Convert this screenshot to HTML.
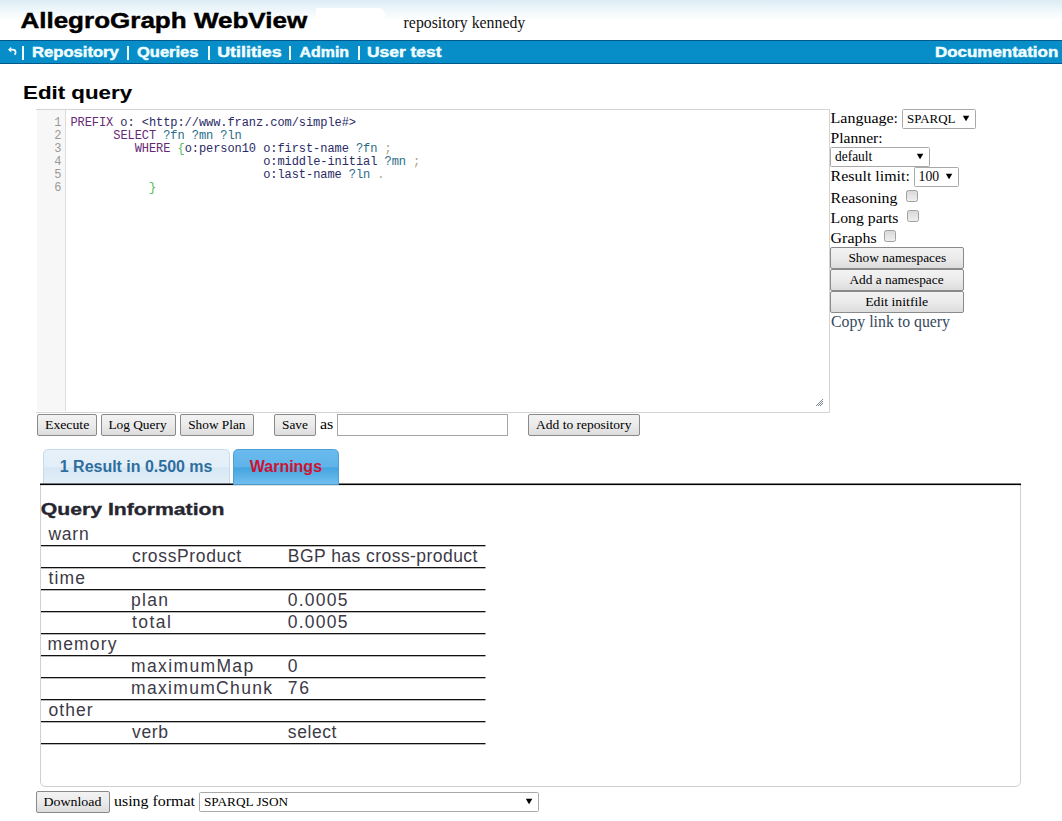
<!DOCTYPE html>
<html><head><meta charset="utf-8"><title>AllegroGraph WebView</title>
<style>html,body{margin:0;padding:0;background:#fff;overflow:hidden;width:1062px;height:821px}svg{display:block}</style>
</head><body>
<svg width="1062" height="821" viewBox="0 0 1062 821"><defs>
<linearGradient id="hdr" x1="0" y1="0" x2="0" y2="1">
 <stop offset="0" stop-color="#dcebf4"/><stop offset="0.1" stop-color="#e3f0f7"/><stop offset="0.25" stop-color="#eef7fb"/><stop offset="0.5" stop-color="#ffffff"/><stop offset="1" stop-color="#ffffff"/>
</linearGradient>
<linearGradient id="btn" x1="0" y1="0" x2="0" y2="1">
 <stop offset="0" stop-color="#f3f3f3"/><stop offset="0.5" stop-color="#ebebeb"/><stop offset="1" stop-color="#dcdcdc"/>
</linearGradient>
<linearGradient id="tab1" x1="0" y1="0" x2="0" y2="1">
 <stop offset="0" stop-color="#e6f1f9"/><stop offset="0.5" stop-color="#e3eff8"/><stop offset="0.52" stop-color="#d6e7f4"/><stop offset="1" stop-color="#e4f0f9"/>
</linearGradient>
<linearGradient id="tab2" x1="0" y1="0" x2="0" y2="1">
 <stop offset="0" stop-color="#6abbee"/><stop offset="0.5" stop-color="#5fb3e9"/><stop offset="0.52" stop-color="#44a4e0"/><stop offset="1" stop-color="#72bfee"/>
</linearGradient>
<linearGradient id="cb" x1="0" y1="0" x2="0" y2="1">
 <stop offset="0" stop-color="#d8d8d8"/><stop offset="1" stop-color="#efefef"/>
</linearGradient>
</defs><rect x="0" y="0" width="1062" height="40" rx="0" fill="url(#hdr)" />
<path d="M316 8 H377 Q385 8 385 16 V40 H316 Z" fill="#ffffff"/>
<text x="20.40" y="28" font-family='"Liberation Sans", sans-serif' font-size="22.5" font-weight="bold" fill="#000" stroke="#000" stroke-width="0.45" textLength="286.80" lengthAdjust="spacingAndGlyphs" >AllegroGraph WebView</text>
<text x="403.60" y="28" font-family='"Liberation Serif", serif' font-size="16" font-weight="normal" fill="#111" textLength="121.63" lengthAdjust="spacingAndGlyphs" >repository kennedy</text>
<rect x="0" y="40" width="1062" height="24" rx="0" fill="#078ec9" />
<rect x="0" y="40" width="1062" height="1" rx="0" fill="#03588a" />
<rect x="0" y="63" width="1062" height="1" rx="0" fill="#03588a" />
<path d="M8 49.7 L11.2 46.8 L11.2 52.6 Z" fill="#effdff"/>
<path d="M10.5 49.6 H12.5 Q15.6 49.6 15.6 52.2 Q15.6 53.6 14.6 54.6" fill="none" stroke="#effdff" stroke-width="1.7"/>
<rect x="22" y="46" width="2" height="14" rx="0" fill="#effdff" />
<rect x="127" y="46" width="2" height="14" rx="0" fill="#effdff" />
<rect x="208" y="46" width="2" height="14" rx="0" fill="#effdff" />
<rect x="289" y="46" width="2" height="14" rx="0" fill="#effdff" />
<rect x="358" y="46" width="2" height="14" rx="0" fill="#effdff" />
<text x="32.00" y="57" font-family='"Liberation Sans", sans-serif' font-size="14" font-weight="bold" fill="#effdff" stroke="#effdff" stroke-width="0.45" textLength="86.82" lengthAdjust="spacingAndGlyphs" >Repository</text>
<text x="137.00" y="57" font-family='"Liberation Sans", sans-serif' font-size="14" font-weight="bold" fill="#effdff" stroke="#effdff" stroke-width="0.45" textLength="61.47" lengthAdjust="spacingAndGlyphs" >Queries</text>
<text x="217.20" y="57" font-family='"Liberation Sans", sans-serif' font-size="14" font-weight="bold" fill="#effdff" stroke="#effdff" stroke-width="0.45" textLength="64.46" lengthAdjust="spacingAndGlyphs" >Utilities</text>
<text x="299.60" y="57" font-family='"Liberation Sans", sans-serif' font-size="14" font-weight="bold" fill="#effdff" stroke="#effdff" stroke-width="0.45" textLength="49.42" lengthAdjust="spacingAndGlyphs" >Admin</text>
<text x="367.00" y="57" font-family='"Liberation Sans", sans-serif' font-size="14" font-weight="bold" fill="#effdff" stroke="#effdff" stroke-width="0.45" textLength="74.46" lengthAdjust="spacingAndGlyphs" >User test</text>
<text x="935.00" y="57" font-family='"Liberation Sans", sans-serif' font-size="14" font-weight="bold" fill="#effdff" stroke="#effdff" stroke-width="0.45" textLength="123.22" lengthAdjust="spacingAndGlyphs" >Documentation</text>
<text x="23.00" y="98.5" font-family='"Liberation Sans", sans-serif' font-size="18" font-weight="bold" fill="#000" stroke="#000" stroke-width="0.1" textLength="109.08" lengthAdjust="spacingAndGlyphs" >Edit query</text>
<rect x="36" y="109" width="794" height="304" rx="0" fill="#fff" />
<path d="M36 109.5 H829.5 V412.5 H36" fill="none" stroke="#d4d4d4"/>
<rect x="37" y="110" width="28" height="301" rx="0" fill="#f7f7f7" />
<rect x="65" y="110" width="1" height="301" rx="0" fill="#dddddd" />
<text x="61.50" y="125.8" font-family='"Liberation Mono", monospace' font-size="12" font-weight="normal" fill="#999" text-anchor="end">1</text>
<text x="61.50" y="138.8" font-family='"Liberation Mono", monospace' font-size="12" font-weight="normal" fill="#999" text-anchor="end">2</text>
<text x="61.50" y="151.8" font-family='"Liberation Mono", monospace' font-size="12" font-weight="normal" fill="#999" text-anchor="end">3</text>
<text x="61.50" y="164.8" font-family='"Liberation Mono", monospace' font-size="12" font-weight="normal" fill="#999" text-anchor="end">4</text>
<text x="61.50" y="177.8" font-family='"Liberation Mono", monospace' font-size="12" font-weight="normal" fill="#999" text-anchor="end">5</text>
<text x="61.50" y="190.8" font-family='"Liberation Mono", monospace' font-size="12" font-weight="normal" fill="#999" text-anchor="end">6</text>
<text x="70.4" y="125.8" font-family='"Liberation Mono", monospace' font-size="12" xml:space="preserve" textLength="285.59999999999997" lengthAdjust="spacing"><tspan fill="#652a75">PREFIX</tspan><tspan fill="#2a2a66"> </tspan><tspan fill="#2a2a66">o:</tspan><tspan fill="#2a2a66"> </tspan><tspan fill="#2a2a66">&lt;http://www.franz.com/simple#&gt;</tspan></text>
<text x="113.24000000000001" y="138.8" font-family='"Liberation Mono", monospace' font-size="12" xml:space="preserve" textLength="128.51999999999998" lengthAdjust="spacing"><tspan fill="#652a75">SELECT</tspan><tspan fill="#2a2a66"> </tspan><tspan fill="#2a6c88">?fn</tspan><tspan fill="#2a2a66"> </tspan><tspan fill="#2a6c88">?mn</tspan><tspan fill="#2a2a66"> </tspan><tspan fill="#2a6c88">?ln</tspan></text>
<text x="134.66" y="151.8" font-family='"Liberation Mono", monospace' font-size="12" xml:space="preserve" textLength="257.03999999999996" lengthAdjust="spacing"><tspan fill="#652a75">WHERE</tspan><tspan fill="#2a2a66"> </tspan><tspan fill="#55bb55">{</tspan><tspan fill="#2a2a66">o:person10</tspan><tspan fill="#2a2a66"> </tspan><tspan fill="#2a2a66">o:first-name</tspan><tspan fill="#2a2a66"> </tspan><tspan fill="#2a6c88">?fn</tspan><tspan fill="#2a2a66"> </tspan><tspan fill="#aaa57a">;</tspan></text>
<text x="263.18" y="164.8" font-family='"Liberation Mono", monospace' font-size="12" xml:space="preserve" textLength="157.07999999999998" lengthAdjust="spacing"><tspan fill="#2a2a66">o:middle-initial</tspan><tspan fill="#2a2a66"> </tspan><tspan fill="#2a6c88">?mn</tspan><tspan fill="#2a2a66"> </tspan><tspan fill="#aaa57a">;</tspan></text>
<text x="263.18" y="177.8" font-family='"Liberation Mono", monospace' font-size="12" xml:space="preserve" textLength="121.38" lengthAdjust="spacing"><tspan fill="#2a2a66">o:last-name</tspan><tspan fill="#2a2a66"> </tspan><tspan fill="#2a6c88">?ln</tspan><tspan fill="#2a2a66"> </tspan><tspan fill="#aaa57a">.</tspan></text>
<text x="148.94" y="190.8" font-family='"Liberation Mono", monospace' font-size="12" xml:space="preserve" textLength="7.14" lengthAdjust="spacing"><tspan fill="#55bb55">}</tspan></text>
<rect x="822" y="399" width="1" height="1" rx="0" fill="#7a8a99" />
<rect x="821" y="400" width="1" height="1" rx="0" fill="#7a8a99" />
<rect x="822" y="401" width="1" height="1" rx="0" fill="#7a8a99" />
<rect x="820" y="401" width="1" height="1" rx="0" fill="#7a8a99" />
<rect x="819" y="402" width="1" height="1" rx="0" fill="#7a8a99" />
<rect x="821" y="402" width="1" height="1" rx="0" fill="#7a8a99" />
<rect x="818" y="403" width="1" height="1" rx="0" fill="#7a8a99" />
<rect x="820" y="403" width="1" height="1" rx="0" fill="#7a8a99" />
<rect x="822" y="403" width="1" height="1" rx="0" fill="#7a8a99" />
<rect x="817" y="404" width="1" height="1" rx="0" fill="#7a8a99" />
<rect x="819" y="404" width="1" height="1" rx="0" fill="#7a8a99" />
<rect x="821" y="404" width="1" height="1" rx="0" fill="#7a8a99" />
<rect x="816" y="405" width="1" height="1" rx="0" fill="#7a8a99" />
<rect x="818" y="405" width="1" height="1" rx="0" fill="#7a8a99" />
<rect x="820" y="405" width="1" height="1" rx="0" fill="#7a8a99" />
<rect x="37.5" y="414.5" width="59" height="21" rx="1.5" fill="url(#btn)" stroke="#8a8a8a" stroke-width="1" />
<text x="45.00" y="429" font-family='"Liberation Serif", serif' font-size="13.2" font-weight="normal" fill="#000" textLength="44.24" lengthAdjust="spacingAndGlyphs" >Execute</text>
<rect x="101.5" y="414.5" width="74" height="21" rx="1.5" fill="url(#btn)" stroke="#8a8a8a" stroke-width="1" />
<text x="108.40" y="429" font-family='"Liberation Serif", serif' font-size="13.2" font-weight="normal" fill="#000" textLength="58.20" lengthAdjust="spacingAndGlyphs" >Log Query</text>
<rect x="180.5" y="414.5" width="73" height="21" rx="1.5" fill="url(#btn)" stroke="#8a8a8a" stroke-width="1" />
<text x="188.20" y="429" font-family='"Liberation Serif", serif' font-size="13.2" font-weight="normal" fill="#000" textLength="57.28" lengthAdjust="spacingAndGlyphs" >Show Plan</text>
<rect x="274.5" y="414.5" width="41" height="21" rx="1.5" fill="url(#btn)" stroke="#8a8a8a" stroke-width="1" />
<text x="282.00" y="429" font-family='"Liberation Serif", serif' font-size="13.2" font-weight="normal" fill="#000" textLength="25.84" lengthAdjust="spacingAndGlyphs" >Save</text>
<text x="320.00" y="428.8" font-family='"Liberation Serif", serif' font-size="15" font-weight="normal" fill="#000" textLength="13.37" lengthAdjust="spacingAndGlyphs" >as</text>
<rect x="337.5" y="414.5" width="170" height="21" rx="0" fill="#fff" stroke="#a5a5a5" stroke-width="1" />
<rect x="528.5" y="414.5" width="111" height="21" rx="1.5" fill="url(#btn)" stroke="#8a8a8a" stroke-width="1" />
<text x="536.00" y="429" font-family='"Liberation Serif", serif' font-size="13.2" font-weight="normal" fill="#000" textLength="95.40" lengthAdjust="spacingAndGlyphs" >Add to repository</text>
<text x="830.60" y="123" font-family='"Liberation Serif", serif' font-size="15.6" font-weight="normal" fill="#000" textLength="67.47" lengthAdjust="spacingAndGlyphs" >Language:</text>
<rect x="902.5" y="109.5" width="73" height="19" rx="1" fill="#fff" stroke="#a9a9a9" stroke-width="1" />
<text x="907.00" y="123" font-family='"Liberation Serif", serif' font-size="13.4" font-weight="normal" fill="#000" textLength="48.48" lengthAdjust="spacingAndGlyphs" >SPARQL</text>
<path d="M962.8 115.7 H969.3 L966.05 121.3 Z" fill="#000"/>
<text x="830.60" y="142.9" font-family='"Liberation Serif", serif' font-size="15.6" font-weight="normal" fill="#000" textLength="52.07" lengthAdjust="spacingAndGlyphs" >Planner:</text>
<rect x="830.5" y="147.5" width="99" height="19" rx="1" fill="#fff" stroke="#a9a9a9" stroke-width="1" />
<text x="835.00" y="160.8" font-family='"Liberation Serif", serif' font-size="13.8" font-weight="normal" fill="#000" textLength="37.31" lengthAdjust="spacingAndGlyphs" >default</text>
<path d="M916.8 153.7 H923.3 L920.05 159.3 Z" fill="#000"/>
<text x="830.60" y="181" font-family='"Liberation Serif", serif' font-size="15.6" font-weight="normal" fill="#000" textLength="79.26" lengthAdjust="spacingAndGlyphs" >Result limit:</text>
<rect x="914.5" y="167.5" width="44" height="19" rx="1" fill="#fff" stroke="#a9a9a9" stroke-width="1" />
<text x="918.60" y="181" font-family='"Liberation Serif", serif' font-size="14.6" font-weight="normal" fill="#000" textLength="20.55" lengthAdjust="spacingAndGlyphs" >100</text>
<path d="M945.8 173.7 H952.3 L949.05 179.3 Z" fill="#000"/>
<text x="830.60" y="203" font-family='"Liberation Serif", serif' font-size="15.6" font-weight="normal" fill="#000" textLength="66.82" lengthAdjust="spacingAndGlyphs" >Reasoning</text>
<rect x="906.5" y="190.5" width="11" height="11" rx="2" fill="url(#cb)" stroke="#a0a0a0" stroke-width="1" />
<text x="830.60" y="222.9" font-family='"Liberation Serif", serif' font-size="15.6" font-weight="normal" fill="#000" textLength="67.84" lengthAdjust="spacingAndGlyphs" >Long parts</text>
<rect x="907.5" y="210.5" width="11" height="11" rx="2" fill="url(#cb)" stroke="#a0a0a0" stroke-width="1" />
<text x="830.60" y="242.8" font-family='"Liberation Serif", serif' font-size="15.6" font-weight="normal" fill="#000" textLength="46.03" lengthAdjust="spacingAndGlyphs" >Graphs</text>
<rect x="884.5" y="230.5" width="11" height="11" rx="2" fill="url(#cb)" stroke="#a0a0a0" stroke-width="1" />
<rect x="830.5" y="247.5" width="133" height="21" rx="1.5" fill="url(#btn)" stroke="#8a8a8a" stroke-width="1" />
<text x="848.40" y="262" font-family='"Liberation Serif", serif' font-size="13.2" font-weight="normal" fill="#000" textLength="97.82" lengthAdjust="spacingAndGlyphs" >Show namespaces</text>
<rect x="830.5" y="269.5" width="133" height="21" rx="1.5" fill="url(#btn)" stroke="#8a8a8a" stroke-width="1" />
<text x="849.40" y="284" font-family='"Liberation Serif", serif' font-size="13.2" font-weight="normal" fill="#000" textLength="94.23" lengthAdjust="spacingAndGlyphs" >Add a namespace</text>
<rect x="830.5" y="291.5" width="133" height="21" rx="1.5" fill="url(#btn)" stroke="#8a8a8a" stroke-width="1" />
<text x="865.20" y="306" font-family='"Liberation Serif", serif' font-size="13.2" font-weight="normal" fill="#000" textLength="63.04" lengthAdjust="spacingAndGlyphs" >Edit initfile</text>
<text x="831.00" y="326.6" font-family='"Liberation Serif", serif' font-size="16" font-weight="normal" fill="#34495e" textLength="119.00" lengthAdjust="spacingAndGlyphs" >Copy link to query</text>
<path d="M40.5 484 V781 Q40.5 786.5 46 786.5 H1015 Q1020.5 786.5 1020.5 781 V484" fill="#fff" stroke="#d0d0d0"/>
<path d="M43.5 484.5 V454.5 Q43.5 449.5 48.5 449.5 H224.5 Q229.5 449.5 229.5 454.5 V484.5" fill="url(#tab1)" stroke="#c5dbec"/>
<text x="59.80" y="471.5" font-family='"Liberation Sans", sans-serif' font-size="15.8" font-weight="bold" fill="#2e6e9e" textLength="152.66" lengthAdjust="spacingAndGlyphs" >1 Result in 0.500 ms</text>
<rect x="40" y="483.5" width="981" height="1.6" rx="0" fill="#000" />
<path d="M233.5 484.6 V454.5 Q233.5 449.5 238.5 449.5 H333.5 Q338.5 449.5 338.5 454.5 V484.6 Z" fill="url(#tab2)" stroke="#4f9fd6"/>
<text x="249.80" y="471.5" font-family='"Liberation Sans", sans-serif' font-size="15.8" font-weight="bold" fill="#cf1230" textLength="72.23" lengthAdjust="spacingAndGlyphs" >Warnings</text>
<text x="40.80" y="514.7" font-family='"Liberation Sans", sans-serif' font-size="17" font-weight="bold" fill="#262630" stroke="#262630" stroke-width="0.35" textLength="183.64" lengthAdjust="spacingAndGlyphs" >Query Information</text>
<text x="48.40" y="540" font-family='"Liberation Sans", sans-serif' font-size="17.5" font-weight="normal" fill="#3c3a46" textLength="40.29" lengthAdjust="spacing" >warn</text>
<rect x="41" y="545" width="444.5" height="1.3" rx="0" fill="#111" />
<text x="132.00" y="562" font-family='"Liberation Sans", sans-serif' font-size="17.5" font-weight="normal" fill="#3c3a46" textLength="109.21" lengthAdjust="spacing" >crossProduct</text>
<text x="287.80" y="562" font-family='"Liberation Sans", sans-serif' font-size="17.5" font-weight="normal" fill="#3c3a46" textLength="189.63" lengthAdjust="spacing" >BGP has cross-product</text>
<rect x="41" y="567" width="444.5" height="1.3" rx="0" fill="#111" />
<text x="48.40" y="584" font-family='"Liberation Sans", sans-serif' font-size="17.5" font-weight="normal" fill="#3c3a46" textLength="36.56" lengthAdjust="spacing" >time</text>
<rect x="41" y="589" width="444.5" height="1.3" rx="0" fill="#111" />
<text x="131.00" y="606" font-family='"Liberation Sans", sans-serif' font-size="17.5" font-weight="normal" fill="#3c3a46" textLength="36.87" lengthAdjust="spacing" >plan</text>
<text x="287.80" y="606" font-family='"Liberation Sans", sans-serif' font-size="17.5" font-weight="normal" fill="#3c3a46" textLength="59.71" lengthAdjust="spacing" >0.0005</text>
<rect x="41" y="611" width="444.5" height="1.3" rx="0" fill="#111" />
<text x="132.00" y="628" font-family='"Liberation Sans", sans-serif' font-size="17.5" font-weight="normal" fill="#3c3a46" textLength="38.87" lengthAdjust="spacing" >total</text>
<text x="287.80" y="628" font-family='"Liberation Sans", sans-serif' font-size="17.5" font-weight="normal" fill="#3c3a46" textLength="59.71" lengthAdjust="spacing" >0.0005</text>
<rect x="41" y="633" width="444.5" height="1.3" rx="0" fill="#111" />
<text x="47.40" y="650" font-family='"Liberation Sans", sans-serif' font-size="17.5" font-weight="normal" fill="#3c3a46" textLength="69.04" lengthAdjust="spacing" >memory</text>
<rect x="41" y="655" width="444.5" height="1.3" rx="0" fill="#111" />
<text x="131.00" y="672" font-family='"Liberation Sans", sans-serif' font-size="17.5" font-weight="normal" fill="#3c3a46" textLength="122.21" lengthAdjust="spacing" >maximumMap</text>
<text x="287.80" y="672" font-family='"Liberation Sans", sans-serif' font-size="17.5" font-weight="normal" fill="#3c3a46" textLength="9.33" lengthAdjust="spacing" >0</text>
<rect x="41" y="677" width="444.5" height="1.3" rx="0" fill="#111" />
<text x="131.00" y="694" font-family='"Liberation Sans", sans-serif' font-size="17.5" font-weight="normal" fill="#3c3a46" textLength="141.00" lengthAdjust="spacing" >maximumChunk</text>
<text x="287.80" y="694" font-family='"Liberation Sans", sans-serif' font-size="17.5" font-weight="normal" fill="#3c3a46" textLength="21.30" lengthAdjust="spacing" >76</text>
<rect x="41" y="699" width="444.5" height="1.3" rx="0" fill="#111" />
<text x="48.40" y="716" font-family='"Liberation Sans", sans-serif' font-size="17.5" font-weight="normal" fill="#3c3a46" textLength="44.22" lengthAdjust="spacing" >other</text>
<rect x="41" y="721" width="444.5" height="1.3" rx="0" fill="#111" />
<text x="132.00" y="738" font-family='"Liberation Sans", sans-serif' font-size="17.5" font-weight="normal" fill="#3c3a46" textLength="36.00" lengthAdjust="spacing" >verb</text>
<text x="287.80" y="738" font-family='"Liberation Sans", sans-serif' font-size="17.5" font-weight="normal" fill="#3c3a46" textLength="48.68" lengthAdjust="spacing" >select</text>
<rect x="41" y="743" width="444.5" height="1.3" rx="0" fill="#111" />
<rect x="36.5" y="791.5" width="73" height="21" rx="1.5" fill="url(#btn)" stroke="#8a8a8a" stroke-width="1" />
<text x="43.40" y="806" font-family='"Liberation Serif", serif' font-size="13.2" font-weight="normal" fill="#000" textLength="58.03" lengthAdjust="spacingAndGlyphs" >Download</text>
<text x="114.00" y="805.6" font-family='"Liberation Serif", serif' font-size="15.3" font-weight="normal" fill="#000" textLength="81.00" lengthAdjust="spacingAndGlyphs" >using format</text>
<rect x="199.5" y="792.5" width="339" height="19" rx="1" fill="#fff" stroke="#a9a9a9" stroke-width="1" />
<text x="204.00" y="806" font-family='"Liberation Serif", serif' font-size="13.4" font-weight="normal" fill="#000" textLength="84.08" lengthAdjust="spacingAndGlyphs" >SPARQL JSON</text>
<path d="M525.8 798.7 H532.3 L529.05 804.3 Z" fill="#000"/></svg>
</body></html>
